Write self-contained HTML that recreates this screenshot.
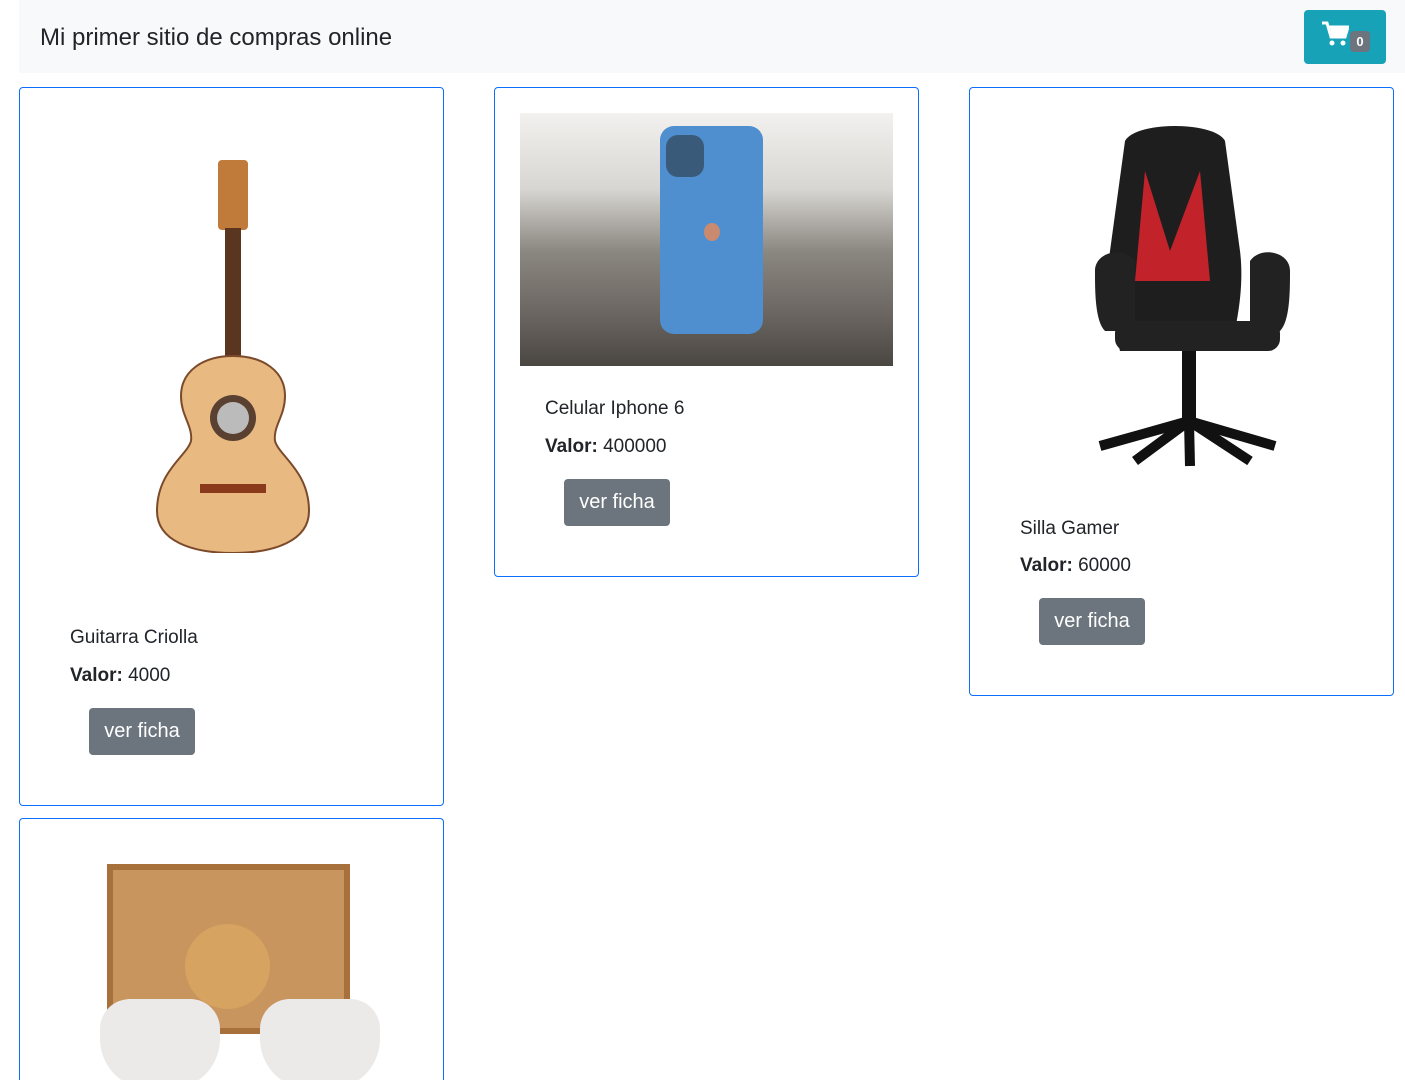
<!DOCTYPE html>
<html style="height:1080px;overflow:hidden"><head><meta charset="utf-8"><style>
*{box-sizing:border-box;margin:0;padding:0}
html{width:1405px;height:1080px;overflow:hidden}
body{width:1405px;height:1080px;overflow:hidden;background:#fff;font-family:"Liberation Sans",sans-serif;color:#212529;position:relative}
.nav{position:absolute;left:19px;top:0;width:1386px;height:73px;background:#f8f9fa}
.nav h1{position:absolute;left:21px;top:24px;font-size:24px;font-weight:400;color:#212529}
.cart{position:absolute;left:1285px;top:10px;width:82px;height:54px;background:#17a2b8;border-radius:4px}
.badge{position:absolute;left:46px;top:21px;width:20px;height:21px;background:#6c757d;border-radius:4px;color:#fff;font-size:13px;font-weight:700;text-align:center;line-height:21px}
.card{position:absolute;border:1px solid #0d6efd;border-radius:4px;background:#fff;overflow:hidden}
.t{position:absolute;font-size:19px}
.v{position:absolute;font-size:19px}
.btn{position:absolute;width:106px;height:47px;background:#6c757d;color:#fff;border-radius:4px;font-size:20px;text-align:center;line-height:47px}
</style></head><body>
<div class="nav"><h1>Mi primer sitio de compras online</h1>
<div class="cart"><svg style="position:absolute;left:17px;top:11px" width="28" height="26" viewBox="0 0 28 26"><path d="M1 2h5l4 14h14l3-10H8" fill="none" stroke="#fff" stroke-width="3"/><path d="M9 7h17l-3 8H11z" fill="#fff"/><circle cx="11" cy="22" r="2.5" fill="#fff"/><circle cx="22" cy="22" r="2.5" fill="#fff"/></svg><div class="badge">0</div></div></div>

<div class="card" style="left:19px;top:87px;width:425px;height:719px">
<svg style="position:absolute;left:130px;top:70px" width="160" height="395" viewBox="0 0 160 395">
<rect x="68" y="2" width="30" height="70" rx="4" fill="#c07a3a"/>
<rect x="75" y="70" width="16" height="140" fill="#5a3520"/>
<path d="M83 198c-30 0-52 15-52 40 0 20 12 30 10 45-4 15-34 30-34 70 0 30 35 42 76 42s76-12 76-42c0-40-30-55-34-70-2-15 10-25 10-45 0-25-22-40-52-40z" fill="#e9b982" stroke="#7a4a2a" stroke-width="2"/>
<circle cx="83" cy="260" r="23" fill="#5a4030"/><circle cx="83" cy="260" r="16" fill="#bbb"/>
<rect x="50" y="326" width="66" height="9" fill="#8a3a1a"/>
</svg>
<div class="t" style="left:50px;top:539px">Guitarra Criolla</div>
<div class="v" style="left:50px;top:577px"><b>Valor:</b> 4000</div>
<div class="btn" style="left:69px;top:620px">ver ficha</div></div>

<div class="card" style="left:494px;top:87px;width:425px;height:490px">
<div style="position:absolute;left:25px;top:25px;width:373px;height:253px;background:linear-gradient(180deg,#f2f1ef 0%,#d8d6d2 30%,#8a8680 55%,#6a6560 80%,#4a4642 100%)">
<div style="position:absolute;left:140px;top:13px;width:103px;height:208px;background:#4f8fcf;border-radius:14px"></div>
<div style="position:absolute;left:146px;top:22px;width:38px;height:42px;background:#3a5a7a;border-radius:12px"></div>
<div style="position:absolute;left:184px;top:110px;width:16px;height:18px;background:#c98a70;border-radius:50%"></div>
</div>
<div class="t" style="left:50px;top:310px">Celular Iphone 6</div>
<div class="v" style="left:50px;top:348px"><b>Valor:</b> 400000</div>
<div class="btn" style="left:69px;top:391px">ver ficha</div></div>

<div class="card" style="left:969px;top:87px;width:425px;height:609px">
<svg style="position:absolute;left:115px;top:33px" width="215" height="365" viewBox="0 0 215 365">
<path d="M40 20c10-20 90-20 100 0l15 110c5 40-5 80-10 100H35c-5-20-15-60-10-100z" fill="#1e1e1e"/>
<path d="M60 50l25 80 30-80 10 110H50z" fill="#d4242c" opacity=".9"/>
<path d="M10 150c0-20 30-25 40-10l0 70H20c-10-10-10-40-10-60zM205 150c0-20-30-25-40-10l0 70h30c10-10 10-40 10-60z" fill="#222"/>
<rect x="30" y="200" width="165" height="30" rx="12" fill="#222"/>
<rect x="97" y="230" width="14" height="70" fill="#111"/>
<path d="M104 300L15 325M104 300L190 325M104 300L105 345M104 300L50 340M104 300L165 340" stroke="#111" stroke-width="10"/>
</svg>
<div class="t" style="left:50px;top:430px">Silla Gamer</div>
<div class="v" style="left:50px;top:467px"><b>Valor:</b> 60000</div>
<div class="btn" style="left:69px;top:510px">ver ficha</div></div>

<div class="card" style="left:19px;top:818px;width:425px;height:262px;border-bottom:none;border-radius:4px 4px 0 0">
<div style="position:absolute;left:87px;top:45px;width:243px;height:170px;background:#c9955e;border:6px solid #a8703a"></div>
<div style="position:absolute;left:165px;top:105px;width:85px;height:85px;background:#d6a360;border-radius:50%"></div>
<div style="position:absolute;left:80px;top:180px;width:120px;height:90px;background:#eceae8;border-radius:30px 30px 50px 50px"></div>
<div style="position:absolute;left:240px;top:180px;width:120px;height:90px;background:#eceae8;border-radius:30px 30px 50px 50px"></div>
</div>
</body></html>
